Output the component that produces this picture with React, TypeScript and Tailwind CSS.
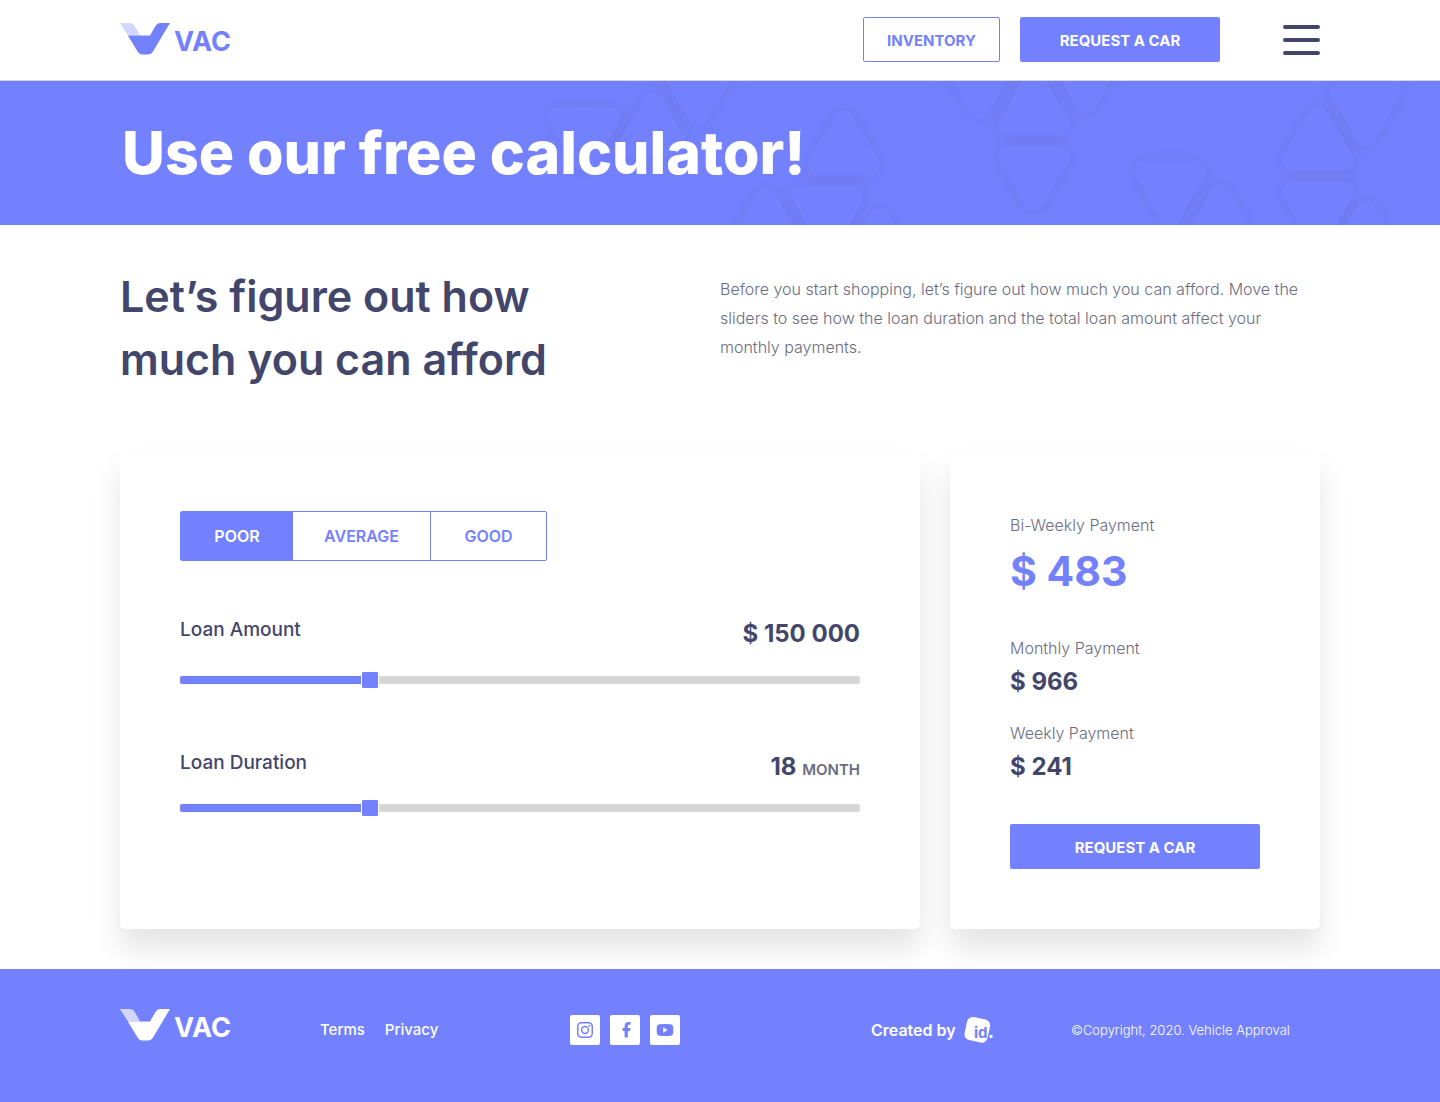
import { useState } from "react";

const TRIANGLES: { x: number; y: number; down?: boolean }[] = [
  { x: 548, y: 26, down: true },
  { x: 617, y: 11 },
  { x: 662, y: -20, down: true },
  { x: 808, y: 29 },
  { x: 730, y: 107 },
  { x: 792, y: 105, down: true },
  { x: 843, y: 128 },
  { x: 943, y: -28, down: true },
  { x: 998, y: -11 },
  { x: 1050, y: -33, down: true },
  { x: 998, y: 65, down: true },
  { x: 1134, y: 80, down: true },
  { x: 1184, y: 104 },
  { x: 1330, y: 0, down: true },
  { x: 1282, y: 25 },
  { x: 1282, y: 100, down: true },
  { x: 1330, y: 120 },
];

const TRIANGLE_PATH = "M27 5.5C31 -1.5 41 -1.5 45 5.5L70.5 49.5C74.5 56.5 69.5 65 61.5 65H10.5C2.5 65 -2.5 56.5 1.5 49.5Z";

function HeroPattern() {
  return (
    <svg
      aria-hidden="true"
      className="absolute inset-0 h-full w-full"
      viewBox="0 0 1440 144"
      preserveAspectRatio="xMidYMid slice"
    >
      <defs>
        <filter id="soft" x="-5%" y="-30%" width="110%" height="160%" colorInterpolationFilters="sRGB">
          <feDropShadow dx="0" dy="0" stdDeviation="9" floodColor="#505070" floodOpacity="0.16" />
        </filter>
      </defs>
      <g fill="#7381ff" filter="url(#soft)">
        {TRIANGLES.map((t) => (
          <path
            key={`${t.x},${t.y}`}
            d={TRIANGLE_PATH}
            transform={t.down ? `translate(${t.x} ${t.y + 65}) scale(1 -1)` : `translate(${t.x} ${t.y})`}
          />
        ))}
      </g>
    </svg>
  );
}

function Logo({ light = false }: { light?: boolean }) {
  return (
    <a
      href="#"
      aria-label="VAC home"
      className={`flex h-9 items-start gap-1 ${light ? "text-white" : "text-[#7381ff]"}`}
    >
      <svg width="50" height="32" viewBox="0 0 50 32" fill="currentColor" aria-hidden="true">
        <path d="M0 0H9.5C12 0 13.5 1 14.8 3L20 12.5H8Z" fill="#d3d7ff" />
        <path d="M7.8 12.4H30L35.5 3C36.7 1 38.2 0 40.5 0H50L33 28.5C31.7 30.6 30.3 31.4 28 31.4H22.5C20.2 31.4 18.8 30.6 17.6 28.5Z" />
      </svg>
      <span className="pt-[5px] text-[27px] leading-7 font-bold">VAC</span>
    </a>
  );
}

function Slider(props: {
  id: string;
  label: string;
  min: number;
  max: number;
  step: number;
  value: number;
  onChange: (v: number) => void;
  gap: string;
  children: React.ReactNode;
}) {
  const f = (props.value - props.min) / (props.max - props.min);
  const stop = `calc(9px + (100% - 18px) * ${f})`;
  return (
    <div>
      <div className="flex items-start justify-between text-[#43466b]">
        <label htmlFor={props.id} className="text-[19px] leading-7 font-medium">
          {props.label}
        </label>
        <output htmlFor={props.id} className="pt-1 text-2xl leading-7 font-bold">
          {props.children}
        </output>
      </div>
      <input
        id={props.id}
        type="range"
        min={props.min}
        max={props.max}
        step={props.step}
        value={props.value}
        onChange={(e) => props.onChange(Number(e.target.value))}
        style={{ backgroundImage: `linear-gradient(to right, #7381ff ${stop}, #d6d6d6 ${stop})` }}
        className={`block h-2 w-full cursor-pointer appearance-none rounded-xs ${props.gap} [&::-webkit-slider-thumb]:size-[18px] [&::-webkit-slider-thumb]:appearance-none [&::-webkit-slider-thumb]:rounded-xs [&::-webkit-slider-thumb]:border [&::-webkit-slider-thumb]:border-white [&::-webkit-slider-thumb]:bg-[#7381ff]`}
      />
    </div>
  );
}

const TABS = [
  { name: "Poor", width: "w-28" },
  { name: "Average", width: "w-[138px] border-r border-[#7381ff]" },
  { name: "Good", width: "w-[115px]" },
];

function Socials() {
  const box = "flex size-[30px] items-center justify-center rounded-xs bg-white text-[#7381ff]";
  return (
    <div className="flex gap-2.5">
      <a href="#" aria-label="Instagram" className={box}>
        <svg width="16" height="16" viewBox="0 0 16 16" fill="none" stroke="currentColor" strokeWidth="1.5">
          <rect x="0.75" y="0.75" width="14.5" height="14.5" rx="3.8" />
          <circle cx="8" cy="8" r="3.4" />
          <circle cx="12.3" cy="3.7" r="0.9" fill="currentColor" stroke="none" />
        </svg>
      </a>
      <a href="#" aria-label="Facebook" className={box}>
        <svg width="16" height="16" viewBox="0 0 16 16" fill="currentColor">
          <path d="M7.6 15.500V8.900H5.600V6H7.600V4.200C7.600 1.500 9.100 0 11.400 0C12.500 0 13.300 0.100 13.600 0.100V2.800H12.200C11.100 2.800 10.800 3.400 10.800 4.300V6H13.500L13.100 8.900H10.800V15.500Z" />
        </svg>
      </a>
      <a href="#" aria-label="YouTube" className={box}>
        <svg width="18" height="14" viewBox="0 0 18 14" fill="currentColor">
          <path
            fillRule="evenodd"
            d="M3.5 1.2Q9 0.6 14.5 1.2Q17 1.5 17.2 4Q17.5 7 17.2 10Q17 12.5 14.5 12.8Q9 13.3 3.5 12.8Q1 12.5 0.8 10Q0.5 7 0.8 4Q1 1.5 3.5 1.2ZM7.2 4.3V9.7L11.6 7Z"
          />
        </svg>
      </a>
    </div>
  );
}

export default function App() {
  const [tab, setTab] = useState("Poor");
  const [amount, setAmount] = useState(150000);
  const [months, setMonths] = useState(18);
  const monthly = Math.round((966 * amount * 18) / (150000 * months));
  const card = "rounded-[5px] bg-white p-[60px] shadow-[0_20px_30px_rgba(0,0,0,0.11)]";

  return (
    <div className="flex min-h-screen flex-col bg-white font-['Inter',sans-serif] text-[#6a6c80]">
      <header className="border-b border-[#d6d6d6]">
        <div className="mx-auto flex max-w-[1200px] items-start pt-[17px] pb-[18px]">
          <div className="mr-auto pt-1.5">
            <Logo />
          </div>
          <button className="h-[45px] w-[137px] rounded-xs border border-[#7381ff] pt-1 text-[15px] font-bold text-[#7381ff]">
            INVENTORY
          </button>
          <button className="ml-5 h-[45px] w-[200px] rounded-xs bg-[#7381ff] pt-1 text-[15px] font-bold text-white">
            REQUEST A CAR
          </button>
          <button aria-label="Menu" className="mt-2 ml-[63px] flex w-[37px] flex-col gap-[9px]">
            <span className="h-1 w-full rounded-full bg-[#43466b]" />
            <span className="h-1 w-full rounded-full bg-[#43466b]" />
            <span className="h-1 w-full rounded-full bg-[#43466b]" />
          </button>
        </div>
      </header>

      <section className="relative overflow-hidden bg-[#7381ff] py-9">
        <HeroPattern />
        <h1 className="relative mx-auto max-w-[1200px] pl-0.5 text-[59px] leading-[72px] font-extrabold text-white">
          Use our free calculator!
        </h1>
      </section>

      <main className="mx-auto w-full max-w-[1200px] pb-10">
        <div className="grid grid-cols-2 pt-10">
          <h2 className="text-[43px] leading-[63px] font-semibold text-[#43466b]">
            Let’s figure out how
            <br />
            much you can afford
          </h2>
          <p className="pt-2.5 pr-2 text-base leading-[29px] font-light">
            Before you start shopping, let’s figure out how much you can afford. Move the
            sliders to see how the loan duration and the total loan amount affect your
            monthly payments.
          </p>
        </div>

        <div className="mt-[60px] flex gap-[30px]">
          <section className={`flex-1 ${card}`}>
            <div role="group" aria-label="Credit score" className="flex h-[50px] w-fit rounded-xs border border-[#7381ff]">
              {TABS.map((t) => (
                <button
                  key={t.name}
                  aria-pressed={tab === t.name}
                  onClick={() => setTab(t.name)}
                  className={`text-base font-semibold uppercase ${t.width} ${
                    tab === t.name ? "bg-[#7381ff] text-white" : "text-[#7381ff]"
                  }`}
                >
                  {t.name}
                </button>
              ))}
            </div>
            <div className="mt-[55px]">
              <Slider id="amount" label="Loan Amount" min={0} max={550000} step={10000} value={amount} onChange={setAmount} gap="mt-7">
                $ {String(amount).replace(/\B(?=(\d{3})+$)/g, " ")}
              </Slider>
            </div>
            <div className="mt-[65px]">
              <Slider id="duration" label="Loan Duration" min={6} max={50} step={1} value={months} onChange={setMonths} gap="mt-5">
                {months} <span className="text-[15px] font-semibold text-[#6a6c80]">MONTH</span>
              </Slider>
            </div>
          </section>

          <section className={`w-[370px] ${card}`}>
            <dl>
              <dt className="text-base leading-[29px] font-light">Bi-Weekly Payment</dt>
              <dd className="text-[41px] leading-[63px] font-bold text-[#7381ff]">$ {Math.round(monthly / 2)}</dd>
              <dt className="mt-[31px] text-base leading-[29px] font-light">Monthly Payment</dt>
              <dd className="text-2xl leading-[38px] font-bold text-[#43466b]">$ {monthly}</dd>
              <dt className="mt-[18px] text-base leading-[29px] font-light">Weekly Payment</dt>
              <dd className="text-2xl leading-[38px] font-bold text-[#43466b]">$ {Math.floor(monthly / 4)}</dd>
            </dl>
            <button className="mt-[38px] h-[45px] w-full rounded-xs bg-[#7381ff] pt-1 text-[15px] font-bold text-white">
              REQUEST A CAR
            </button>
          </section>
        </div>
      </main>

      <footer className="relative flex-1 bg-[#7381ff] pt-10 pb-14 text-white">
        <div className="mx-auto grid max-w-[1200px] grid-cols-[200fr_250fr_301fr_200fr_249fr] items-start">
          <Logo light />
          <nav className="flex gap-5 pt-[9px] text-[15px] leading-6 font-medium">
            <a href="#">Terms</a>
            <a href="#">Privacy</a>
          </nav>
          <div className="pt-1.5">
            <Socials />
          </div>
          <a href="#" className="flex items-start gap-2 pt-[7px] text-base leading-7 font-semibold">
            Created by
            <svg width="30" height="28" viewBox="0 0 30 28" role="img" aria-label="id.">
              <rect x="1.5" y="2" width="23.5" height="23.5" rx="6" fill="#fff" transform="rotate(12 13 14)" />
              <text x="10" y="22" fontSize="15" fontWeight="700" fill="#7381ff">
                id
              </text>
              <circle cx="27" cy="20.5" r="1.7" fill="#fff" />
            </svg>
          </a>
          <p className="pt-[9px] text-[13px] leading-6 font-light">©Copyright, 2020. Vehicle Approval</p>
        </div>
      </footer>
    </div>
  );
}
